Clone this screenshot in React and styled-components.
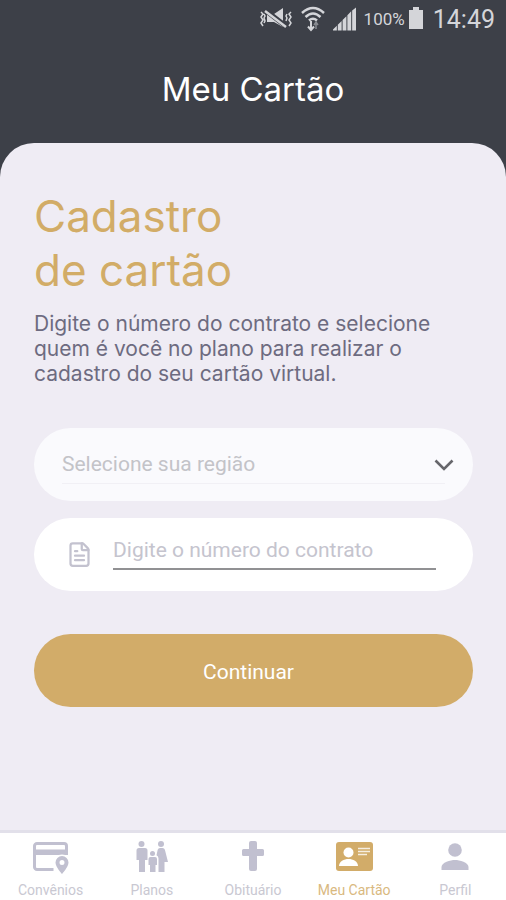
import React, { useState } from 'react'
import styled, { createGlobalStyle } from 'styled-components'
import { FileText } from 'lucide-react'

const GlobalStyle = createGlobalStyle`
  * {
    box-sizing: border-box;
  }

  body {
    margin: 0;
    background: #3d4048;
    font-family: Roboto, 'Liberation Sans', sans-serif;
  }
`

const Screen = styled.div`
  display: flex;
  flex-direction: column;
  min-height: 100vh;
  background: #3d4048;
`

const StatusBar = styled.div`
  display: flex;
  align-items: center;
  justify-content: flex-end;
  height: 38px;
  padding: 0 11px 0 0;
  color: #d4d5d9;

  svg {
    display: block;
    flex: none;
  }
`

const SignalIcons = styled.div`
  display: flex;
  align-items: center;
  gap: 8px;
  margin-right: 8px;
`

const BatteryLevel = styled.span`
  margin-right: 4px;
  font-size: 17px;
`

const Clock = styled.time`
  margin-left: 10px;
  font-size: 25px;
`

const Header = styled.header`
  padding: 29px 0 32px;
  text-align: center;
`

const HeaderTitle = styled.h1`
  margin: 0;
  color: #fff;
  font-family: Inter, Roboto, sans-serif;
  font-size: 33px;
  font-weight: 400;
  line-height: 44px;
`

const Sheet = styled.main`
  flex: 1;
  padding: 46px 33px 32px 34px;
  background: #efecf4;
  border-radius: 34px 34px 0 0;
`

const Title = styled.h2`
  margin: 0;
  color: #d2ac67;
  font-family: Inter, Roboto, sans-serif;
  font-size: 44px;
  font-weight: 400;
  line-height: 54px;
`

const Description = styled.p`
  max-width: 430px;
  margin: 14px 0 42px;
  color: #6d6b80;
  font-family: Inter, Roboto, sans-serif;
  font-size: 21px;
  line-height: 25px;
`

const Form = styled.form`
  display: flex;
  flex-direction: column;
  gap: 17px;
`

const Field = styled.label`
  position: relative;
  display: flex;
  align-items: center;
  height: 73px;
  padding: ${(props) => (props.$muted ? '0 28px' : '0 37px 0 32px')};
  background: ${(props) => (props.$muted ? '#fafafd' : '#fff')};
  border-radius: 37px;
  color: #c3c2cf;

  > svg {
    flex: none;
  }
`

const RegionSelect = styled.select`
  width: 100%;
  height: 38px;
  padding: 0;
  background: transparent;
  border: none;
  border-bottom: 1px solid #f1f0f5;
  border-radius: 0;
  color: #c3c3c8;
  font-family: inherit;
  font-size: 21px;
  appearance: none;
  outline: none;
`

const Chevron = styled.svg`
  position: absolute;
  right: 19px;
  pointer-events: none;
`

const ContractInput = styled.input`
  flex: 1;
  align-self: flex-end;
  min-width: 0;
  height: 38px;
  margin: 0 0 21px 20px;
  padding: 0;
  background: transparent;
  border: none;
  border-bottom: 2px solid #919193;
  border-radius: 0;
  color: #55545f;
  font-family: inherit;
  font-size: 21px;
  outline: none;

  &::placeholder {
    color: #c5c4ce;
    opacity: 1;
  }
`

const SubmitButton = styled.button`
  height: 73px;
  margin-top: 26px;
  padding: 2px 10px 0 0;
  background: #d2ac69;
  border: none;
  border-radius: 37px;
  color: #fff;
  font-family: inherit;
  font-size: 21px;
  cursor: pointer;
`

const TabBar = styled.nav`
  display: grid;
  grid-template-columns: repeat(5, 1fr);
  background: #fff;
  border-top: 3px solid #e2e0ea;
`

const Tab = styled.a`
  display: flex;
  flex-direction: column;
  align-items: center;
  gap: 6px;
  padding-top: 8px;
  color: ${(props) => (props.$active ? '#d2ac69' : '#c1c0d0')};
  text-decoration: none;
  white-space: nowrap;

  svg {
    display: block;
  }
`

const TabLabel = styled.span`
  color: ${(props) => (props.$active ? '#d9b97f' : '#c9c8d2')};
  font-size: 14px;
  line-height: 19px;
`

const MutedIcon = () => (
  <svg width="34" height="22" viewBox="0 0 34 22" fill="none" stroke="currentColor">
    <path d="M8 6h7l9-6v19l-9-5H8z" fill="currentColor" stroke="none" />
    <path d="M6 2l22 17" stroke="#3d4048" strokeWidth="5" />
    <path d="M6 3l21 16" strokeWidth="2.5" />
    <path
      d="M2 4l2 2-2 3 2 3-2 3 2 3M5 6l1 2-1 2 1 3-1 2M32 4l-2 2 2 3-2 3 2 3-2 3M28 6l-1 2 1 2-1 3"
      strokeWidth="1.5"
    />
  </svg>
)

const WifiIcon = () => (
  <svg width="24" height="26" viewBox="0 0 24 26" fill="none" stroke="currentColor">
    <path d="M1 7Q12-3 23 7M4.5 11Q12 4 19.5 11M8 14.500q4-3.500 8 0" strokeWidth="2.5" />
    <path d="M10 15v8M7 20.500l3 3.500 3-3.500" strokeWidth="2" />
    <path d="M15 23v-6M13 19l2-3 2 3" strokeWidth="1.5" opacity="0.5" />
  </svg>
)

const SignalIcon = () => (
  <svg width="23" height="24" viewBox="0 0 24 24" fill="currentColor">
    <path d="M0 24v-1l4-4v5zM5 24v-6l4-4v10zM10 24V13l4-4v15zM15 24V8l4-4v20zM20 24V3l4-3v24z" />
  </svg>
)

const BatteryIcon = () => (
  <svg width="14" height="24" viewBox="0 0 14 24" fill="currentColor">
    <path d="M4 0h6v3h4v19H0V3h4z" />
  </svg>
)

const BenefitsIcon = () => (
  <svg width="37" height="34" viewBox="0 0 37 34">
    <path
      d="M21.500 28.500H5A2.500 2.500 0 0 1 2.500 26V5A2.500 2.500 0 0 1 5 2.500h27A2.500 2.500 0 0 1 34.500 5v8"
      fill="none"
      stroke="currentColor"
      strokeWidth="3"
    />
    <path d="M2 8.500h34V14H2z" fill="currentColor" />
    <circle cx="30" cy="22" r="8.500" fill="#fff" />
    <path
      d="M30 15a6.500 6.500 0 0 0-6.500 6.500C23.500 26 30 33 30 33s6.500-7 6.500-11.500A6.500 6.500 0 0 0 30 15zm0 9a2.500 2.500 0 1 1 0-5 2.500 2.500 0 0 1 0 5z"
      fill="currentColor"
      fillRule="evenodd"
    />
  </svg>
)

const FamilyIcon = () => (
  <svg width="32" height="34" viewBox="0 0 32 34" fill="currentColor">
    <circle cx="5.500" cy="3" r="3" />
    <path d="M3 7h6a2.500 2.500 0 0 1 2.500 2.500V19H9v12H3V19H.5V9.500A2.500 2.500 0 0 1 3 7z" />
    <circle cx="16.500" cy="12.500" r="2.500" />
    <path d="M14.500 16h4.500a2 2 0 0 1 2 2v6h-1.500v7h-5.500v-7h-1.500v-6a2 2 0 0 1 2-2z" />
    <circle cx="25" cy="3" r="3" />
    <path d="M24 7h2.500a2.500 2.500 0 0 1 2.400 1.800L32 21h-3.500v10h-6V17.500a3.500 3.500 0 0 0-2-3.200l1.200-5.500A2.500 2.500 0 0 1 24 7z" />
  </svg>
)

const CrossIcon = () => (
  <svg width="24" height="34" viewBox="0 0 24 34" fill="currentColor">
    <path d="M10 0h4a2 2 0 0 1 2 2v6h5.500A1.500 1.500 0 0 1 23 9.500v4a1.500 1.500 0 0 1-1.500 1.500H16v13a2 2 0 0 1-2 2h-4a2 2 0 0 1-2-2V15H2.500A1.500 1.500 0 0 1 1 13.500v-4A1.500 1.500 0 0 1 2.500 8H8V2a2 2 0 0 1 2-2z" />
  </svg>
)

const CardIcon = () => (
  <svg width="38" height="34" viewBox="0 0 38 34">
    <rect x="1" y="1" width="37" height="29" rx="3" fill="currentColor" />
    <circle cx="13.500" cy="11.500" r="5" fill="#fff" />
    <path d="M4 25c0-4.500 5-7 9.500-7s9.500 2.500 9.500 7z" fill="#fff" />
    <path d="M23 7.500h12M23 10.500h12M23 13.500h9" stroke="#fff" strokeWidth="1.700" opacity="0.8" />
  </svg>
)

const ProfileIcon = () => (
  <svg width="28" height="34" viewBox="0 0 28 34" fill="currentColor">
    <circle cx="14" cy="9" r="6.800" />
    <path d="M.5 29v-3c0-4.500 9-7 13.500-7s13.500 2.500 13.500 7v3z" />
  </svg>
)

const tabs = [
  { id: 'convenios', label: 'Convênios', icon: <BenefitsIcon /> },
  { id: 'planos', label: 'Planos', icon: <FamilyIcon /> },
  { id: 'obituario', label: 'Obituário', icon: <CrossIcon /> },
  { id: 'cartao', label: 'Meu Cartão', icon: <CardIcon /> },
  { id: 'perfil', label: 'Perfil', icon: <ProfileIcon /> }
]

const App = () => {
  const [region, setRegion] = useState('')
  const [contract, setContract] = useState('')

  return (
    <Screen>
      <GlobalStyle />
      <StatusBar>
        <SignalIcons>
          <MutedIcon />
          <WifiIcon />
          <SignalIcon />
        </SignalIcons>
        <BatteryLevel>100%</BatteryLevel>
        <BatteryIcon />
        <Clock>14:49</Clock>
      </StatusBar>

      <Header>
        <HeaderTitle>Meu Cartão</HeaderTitle>
      </Header>

      <Sheet>
        <Title>
          Cadastro
          <br />
          de cartão
        </Title>
        <Description>
          Digite o número do contrato e selecione quem é você no plano para realizar o cadastro do
          seu cartão virtual.
        </Description>

        <Form onSubmit={(e) => e.preventDefault()}>
          <Field htmlFor="region" $muted>
            <RegionSelect id="region" value={region} onChange={(e) => setRegion(e.target.value)}>
              <option value="">Selecione sua região</option>
            </RegionSelect>
            <Chevron width="20" height="12" viewBox="0 0 20 12" fill="none">
              <path d="M1.500 1.500L10 10l8.500-8.500" stroke="#66666b" strokeWidth="2.600" />
            </Chevron>
          </Field>
          <Field htmlFor="contract">
            <FileText size={27} strokeWidth={2} />
            <ContractInput
              id="contract"
              type="text"
              placeholder="Digite o número do contrato"
              value={contract}
              onChange={(e) => setContract(e.target.value)}
            />
          </Field>
          <SubmitButton type="submit">Continuar</SubmitButton>
        </Form>
      </Sheet>

      <TabBar>
        {tabs.map((tab) => (
          <Tab key={tab.id} href={`#${tab.id}`} $active={tab.id === 'cartao'}>
            {tab.icon}
            <TabLabel $active={tab.id === 'cartao'}>{tab.label}</TabLabel>
          </Tab>
        ))}
      </TabBar>
    </Screen>
  )
}

export default App
